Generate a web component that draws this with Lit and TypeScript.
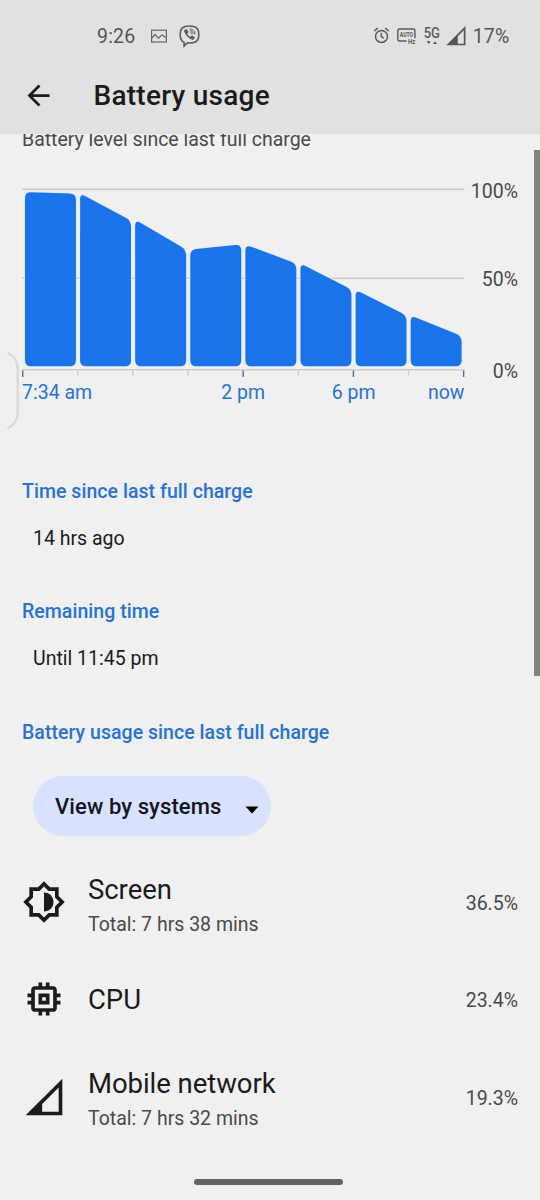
import { LitElement, html, css, svg } from "lit";
import { customElement, property } from "lit/decorators.js";

interface UsageItem {
  icon: string;
  name: string;
  total?: string;
  percent: string;
}

const ICONS: Record<string, string> = {
  brightness:
    "M20 15.31L23.31 12 20 8.69V4h-4.69L12 .69 8.69 4H4v4.69L.69 12 4 15.31V20h4.69L12 23.31 15.31 20H20v-4.69zM18 14.48V18h-3.52L12 20.48 9.52 18H6v-3.52L3.52 12 6 9.52V6h3.52L12 3.52 14.48 6H18v3.52L20.48 12 18 14.48zM12 6.8v10.4c2.9 0 5.2-2.3 5.2-5.2S14.9 6.8 12 6.8z",
  memory:
    "M15 9H9v6h6V9zm-2 4h-2v-2h2v2zm8-2V9h-2V7c0-1.1-.9-2-2-2h-2V3h-2v2h-2V3H9v2H7c-1.1 0-2 .9-2 2v2H3v2h2v2H3v2h2v2c0 1.1.9 2 2 2h2v2h2v-2h2v2h2v-2h2c1.1 0 2-.9 2-2v-2h2v-2h-2v-2h2zm-4 6H7V7h10v10z",
  network: "M2 22h20V2zM20 20h-9V15.83L20 6.83z",
};

/** Builds a closed polygon path whose corners are softened by the given cut. */
function roundedPolygon(points: number[][], cut: number): string {
  const n = points.length;
  const toward = (a: number[], b: number[]) => {
    const d = Math.hypot(b[0] - a[0], b[1] - a[1]);
    return [a[0] + ((b[0] - a[0]) * cut) / d, a[1] + ((b[1] - a[1]) * cut) / d];
  };
  return (
    points
      .map((p, i) => {
        const start = toward(p, points[(i + n - 1) % n]);
        const end = toward(p, points[(i + 1) % n]);
        return `${i ? "L" : "M"}${start} Q${p} ${end}`;
      })
      .join(" ") + "Z"
  );
}

@customElement("battery-chart")
export class BatteryChart extends LitElement {
  static styles = css`
    :host { display: block; }
    .plot { display: flex; justify-content: space-between; height: 196px; padding-right: 22px; }
    .graph { display: block; width: 444px; height: 196px; }
    .levels {
      display: flex; flex-direction: column; align-items: flex-end;
      color: #4a4a4a; margin-top: -0.4px;
    }
    .level { height: 22px; line-height: 22px; flex: none; }
    .level + .level { margin-top: 66.5px; }
    .level:last-child { margin-top: 69.5px; }
    .hours {
      display: grid; grid-template-columns: 166px 110.5px 110.5px 55.5px;
      line-height: 22px; color: #2873cf; margin-top: 5px; white-space: nowrap;
    }
    .mid { text-align: center; }
    .end { text-align: right; }
  `;

  private bars = [
    [192, 193.8], [193.3, 220.5], [219.8, 249.5], [249.6, 244.5],
    [244.6, 263.5], [263.4, 289.5], [289.8, 315.5], [315.4, 336],
  ];

  render() {
    return html`
      <div class="plot">
        <svg class="graph" viewBox="22 181 444 196">
          <path d="M22 189.3H464.5M22 278.3H464.5M22 369.8H464.5" stroke="#cbcbc8" stroke-width="1.4" />
          ${this.bars.map(([l, r], i) => {
            const x = 25 + i * 55.1;
            return svg`<path fill="#1a73e8" stroke="#dfeaf8" stroke-width="1.6" paint-order="stroke"
              d=${roundedPolygon([[x, l], [x + 50.9, r], [x + 50.9, 366.3], [x, 366.3]], 6)} />`;
          })}
          ${Array.from({ length: 9 }, (_, i) => {
            const major = [0, 4, 6, 8].includes(i);
            return svg`<path d="M${22.7 + i * 55.12} 370.4V${major ? 377 : 375.5}"
              stroke=${major ? "#2b78d0" : "#cbcbc8"} stroke-width="1.4" />`;
          })}
        </svg>
        <div class="levels">
          <span class="level">100%</span><span class="level">50%</span><span class="level">0%</span>
        </div>
      </div>
      <div class="hours">
        <span>7:34 am</span><span class="mid">2 pm</span><span class="mid">6 pm</span><span class="end">now</span>
      </div>
    `;
  }
}

@customElement("usage-row")
export class UsageRow extends LitElement {
  @property({ attribute: false }) item!: UsageItem;

  static styles = css`
    :host { display: flex; align-items: center; gap: 22px; height: 97.3px; padding: 0 22px; }
    .icon { width: 44px; height: 44px; flex: none; fill: #1b1b1b; margin-top: -2px; }
    .text { flex: 1; }
    .name { font-size: 27.5px; line-height: 36px; color: #1b1b1b; letter-spacing: -0.05px; }
    .total, .percent { color: #4a4a4a; line-height: 26px; }
    .total { margin-top: 4px; }
    .percent { padding-top: 2px; }
    .text.double { padding-top: 3px; }
  `;

  render() {
    const { icon, name, total, percent } = this.item;
    return html`
      <svg class="icon" viewBox="0 0 24 24"><path fill-rule="evenodd" d=${ICONS[icon]} /></svg>
      <div class="text ${total ? "double" : ""}">
        <div class="name">${name}</div>
        ${total ? html`<div class="total">${total}</div>` : null}
      </div>
      <div class="percent">${percent}</div>
    `;
  }
}

@customElement("status-bar")
export class StatusBar extends LitElement {
  static styles = css`
    :host {
      display: flex; align-items: center; height: 72px; box-sizing: border-box;
      padding: 0 30.5px 0 97px; color: #565656; font-size: 19.5px; letter-spacing: 0.2px;
    }
    svg { display: block; flex: none; overflow: visible; }
    .picture { margin-left: 16px; }
    .viber { margin-left: 12px; }
    .right { margin-left: auto; display: flex; align-items: center; }
    .auto { margin-left: 8px; }
    .five { margin-left: 8px; }
    .signal { margin-left: 6px; margin-right: 7px; }
    .tiny { font: 700 6.5px "Roboto", sans-serif; letter-spacing: 0; fill: #5a5a5a; }
    .net { font: 500 14px "Roboto", sans-serif; letter-spacing: 0; fill: #5a5a5a; }
  `;

  render() {
    return html`
      <span>9:26</span>
      <svg class="picture" width="16" height="13" viewBox="0 0 16 13" fill="none" stroke="#666" stroke-width="1.2">
        <rect x=".6" y=".2" width="14.8" height="11.8" />
        <path d="M1 8L4 4.5l3.6 3.6L10 5.8l1.3-.8L15 7.8" />
      </svg>
      <svg class="viber" width="21" height="22" viewBox="0 0 21 22" fill="none" stroke="#5e5e5e">
        <path stroke-width="1.6" d="M10.5 1C4 1 1.2 3 1.2 9.5c0 4.5 1 6.8 3.9 7.9V21l3.2-3.1c.7.1 1.4.1 2.2.1 6.5 0 9.3-2 9.3-8.5S17 1 10.5 1z" />
        <path fill="#5e5e5e" stroke="none" d="M5.3 5.2l1.5-.9c.5-.3.9-.1 1.2.3l1.3 1.9c.3.5.2.9-.2 1.2l-.8.7c.4 1.6 1.5 2.7 3.2 3.3l.8-.9c.3-.4.8-.4 1.2-.1l1.9 1.3c.5.3.5.8.2 1.2l-1 1.3c-.4.5-1 .6-1.6.3-3.7-1.6-6.3-4.3-7.8-8-.2-.6-.3-1.2.1-1.6z" />
        <path stroke-width="1" stroke-linecap="round" d="M11 3.9c3 .1 4.9 2 5 5M11.2 5.7c1.9.1 3 1.2 3.1 3.1M11.4 7.4c.8.1 1.2.5 1.2 1.3" />
      </svg>
      <div class="right">
        <svg width="15" height="16" viewBox="0 0 15 16" fill="none" stroke="#5a5a5a" stroke-width="1.5">
          <circle cx="7.5" cy="8.4" r="6" />
          <path d="M7.3 4.8v3.8l2.6 1.6M.3 3L3.8.2M14.7 3L11.2.2" />
        </svg>
        <svg class="auto" width="19" height="16" viewBox="0 0 19 16">
          <path fill="none" stroke="#5a5a5a" stroke-width="1.4" d="M9.5 13H2.2a1.4 1.4 0 0 1-1.4-1.4V2.4A1.4 1.4 0 0 1 2.2 1h14.3a1.4 1.4 0 0 1 1.4 1.4v7.9" />
          <text class="tiny" x="2.8" y="9.4" textLength="13.2" lengthAdjust="spacingAndGlyphs">AUTO</text>
          <text class="tiny" x="11" y="16" font-style="italic" textLength="7.4" lengthAdjust="spacingAndGlyphs">Hz</text>
        </svg>
        <svg class="five" width="16" height="18" viewBox="0 0 16 18">
          <text class="net" x="-.3" y="10.6" textLength="16.3" lengthAdjust="spacingAndGlyphs">5G</text>
          <path fill="#505050" d="M2.700 14.300h4L4.700 17zM9 17h4l-2-2.700z" />
        </svg>
        <svg class="signal" width="20" height="20" viewBox="0 0 20 20">
          <path fill="#565656" fill-rule="evenodd" d="M.3 19.300h19.200V.1zM17.800 17.700h-6V10.300L17.800 4.200z" />
        </svg>
        <span>17%</span>
      </div>
    `;
  }
}

@customElement("app-root")
export class AppRoot extends LitElement {
  static styles = css`
    :host {
      display: block; position: relative; height: 1200px; overflow: hidden;
      background: #f0f0f0; color: #1b1b1b;
      font: 400 19.5px "Roboto", sans-serif;
    }
    .header { position: relative; z-index: 1; height: 134px; background: #e1e1e1; }
    .bar { display: flex; align-items: center; height: 46px; padding-left: 22px; gap: 38.5px; }
    .back { display: block; width: 33px; height: 33px; }
    .title { font-size: 28px; font-weight: 500; margin: 2px 0 0; line-height: 36px; letter-spacing: 0.25px; }
    .caption { line-height: 22px; margin-top: -5px; padding-left: 22px; color: #4a4a4a; letter-spacing: -0.02px; }
    .chart { margin: 30px 0 0 22px; }
    .heading {
      margin: 0; padding-left: 22px; font-size: 19.5px; font-weight: 500;
      line-height: 26px; letter-spacing: 0.04px; color: #2873cf;
    }
    .value { padding-left: 33px; line-height: 26px; margin: 21px 0 47.5px; }
    .first { margin-top: 74.5px; }
    .select {
      display: flex; align-items: center; justify-content: space-between; box-sizing: border-box;
      width: 238px; height: 60px; margin: 30px 0 19px 33px; padding: 1px 12px 0 22px;
      border: 0; border-radius: 30px; background: #d8e1fe; color: #14161d;
      font: 500 22px "Roboto", sans-serif; letter-spacing: 0.1px;
    }
    .arrow { width: 14px; height: 8px; margin-top: 7px; }
    .scrollbar { position: absolute; right: 0; top: 150px; width: 6px; height: 526px; background: #828282; }
    .edge { position: absolute; left: 0; top: 348px; width: 22px; height: 86px; }
    .pill { position: absolute; left: 194px; top: 1179px; width: 148.5px; height: 6px; border-radius: 3px; background: #626262; }
  `;

  private items: UsageItem[] = [
    { icon: "brightness", name: "Screen", total: "Total: 7 hrs 38 mins", percent: "36.5%" },
    { icon: "memory", name: "CPU", percent: "23.4%" },
    { icon: "network", name: "Mobile network", total: "Total: 7 hrs 32 mins", percent: "19.3%" },
  ];

  render() {
    return html`
      <header class="header">
        <status-bar></status-bar>
        <div class="bar">
          <svg class="back" viewBox="0 0 24 24"><path fill="#1b1b1b" d="M20 11H7.83l5.59-5.59L12 4l-8 8 8 8 1.41-1.41L7.83 13H20v-2z" /></svg>
          <h1 class="title">Battery usage</h1>
        </div>
      </header>
      <main>
        <div class="caption">Battery level since last full charge</div>
        <battery-chart class="chart"></battery-chart>
        <h2 class="heading first">Time since last full charge</h2>
        <div class="value">14 hrs ago</div>
        <h2 class="heading">Remaining time</h2>
        <div class="value">Until 11:45 pm</div>
        <h2 class="heading">Battery usage since last full charge</h2>
        <button class="select">
          View by systems
          <svg class="arrow" viewBox="0 0 14 8"><path d="M.5.5h13L7 7.5z" /></svg>
        </button>
        ${this.items.map((item) => html`<usage-row .item=${item}></usage-row>`)}
      </main>
      <div class="scrollbar"></div>
      <svg class="edge" viewBox="0 348 22 86">
        <path d="M7.5 353C14 356 17.7 361 17.7 368V413C17.7 420 14 425 7.5 428.5" fill="none" stroke="#d9d9d9" stroke-width="2.4" />
      </svg>
      <div class="pill"></div>
    `;
  }
}
